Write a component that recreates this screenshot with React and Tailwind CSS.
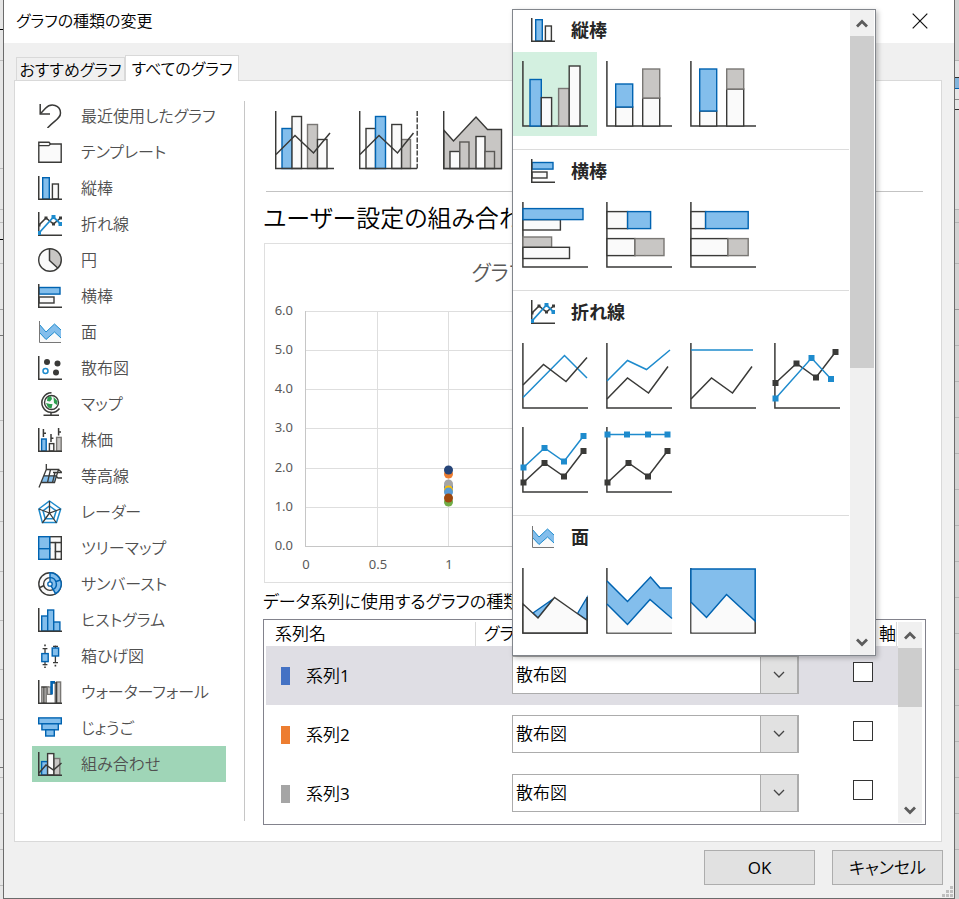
import React from "react";

const DARK = "#3a3a38";
const WHITE = "#fafafa";
const BLUE = "#83beec";
const BLUE_EDGE = "#0063b1";
const BLUE_LINE = "#1e8bcd";
const GRAY = "#c8c6c4";
const GRAY_EDGE = "#797774";

const TONES = {
  blue: [BLUE, BLUE_EDGE],
  gray: [GRAY, GRAY_EDGE],
  darkGray: [GRAY, "#5a5956"],
  white: [WHITE, DARK],
};

function Box({ tone, x, y, w, h, sw = 1.4 }) {
  const [fill, stroke] = TONES[tone];
  return <rect x={x} y={y} width={w} height={h} fill={fill} stroke={stroke} strokeWidth={sw} />;
}

function Line({ d, color = DARK, sw = 1.5 }) {
  return <path d={d} fill="none" stroke={color} strokeWidth={sw} />;
}

function Marked({ points, color, size = 6, sw = 1.5 }) {
  return (
    <g>
      <polyline points={points.map((p) => p.join(",")).join(" ")} fill="none" stroke={color} strokeWidth={sw} />
      {points.map(([x, y]) => (
        <rect key={x} x={x - size / 2} y={y - size / 2} width={size} height={size} fill={color} />
      ))}
    </g>
  );
}

const SmallAxis = () => <Line d="M.75 0V23.25H24" />;

const smallIcons = {
  recent: (
    <g>
      <Line d="M2.2 0V10H12" />
      <Line d="M2.4 9.8L7.5 4.2C13-1.5 22.5 1 22.5 9C22.5 14.5 17 16 9.5 24" />
    </g>
  ),
  template: (
    <g>
      <path d="M.8 2.2H11L12.5 4H23.2V22.2H.8Z" fill={WHITE} stroke={DARK} strokeWidth="1.4" />
      <Line d="M.8 5.6H10.8L12.5 4" sw={1.2} />
    </g>
  ),
  column: (
    <g>
      <Box tone="blue" x={4.7} y={1.7} w={6.6} h={21.3} />
      <Box tone="white" x={14.4} y={8} w={6} h={15} />
      <SmallAxis />
    </g>
  ),
  line: (
    <g>
      <SmallAxis />
      <Marked points={[[1, 13], [8, 6], [15.5, 12], [22.5, 6]]} color={DARK} size={3} sw={1.6} />
      <Marked points={[[1, 21], [15.5, 5], [22.5, 12]]} color={BLUE_LINE} size={4} sw={1.8} />
    </g>
  ),
  pie: (
    <g>
      <circle cx="12" cy="12" r="11.3" fill={WHITE} />
      <path d="M11.5 .8V12.5L20 20.3A11.3 11.3 0 0 0 12 .7Z" fill={GRAY} />
      <circle cx="12" cy="12" r="11.3" fill="none" stroke={DARK} strokeWidth="1.4" />
      <Line d="M11.5 .8V12.5L20 20.3" />
    </g>
  ),
  bar: (
    <g>
      <Box tone="blue" x={1} y={3.5} w={21} h={6.6} />
      <Box tone="white" x={1} y={13} w={15} h={6} />
      <SmallAxis />
    </g>
  ),
  area: (
    <g>
      <path d="M1.5 12L8 19.5L16.5 12L23 18V22H1.5Z" fill={WHITE} />
      <path d="M1.5 4.5L8 12L16.5 4L23 10V18L16.5 12L8 19.5L1.5 12.5Z" fill={BLUE} />
      <Line d="M1.5 4.5L8 12L16.5 4L23 10M1.5 12.5L8 19.5L16.5 12L23 18" color={BLUE_LINE} sw={1} />
      <Line d="M1.5 1V22.5H23" sw={1} color="#777" />
    </g>
  ),
  scatter: (
    <g>
      <SmallAxis />
      <circle cx="9" cy="6" r="3" fill={DARK} />
      <circle cx="19.5" cy="7.5" r="3" fill={DARK} />
      <circle cx="18" cy="16.5" r="3" fill={DARK} />
      <circle cx="7.5" cy="15" r="2.5" fill="#fff" stroke={BLUE_LINE} strokeWidth="1.5" />
    </g>
  ),
  map: (
    <g>
      <circle cx="13.5" cy="10.5" r="7" fill={WHITE} stroke={DARK} strokeWidth="1.4" />
      <path d="M9.5 5.5L13 4L14 7L12 9.5L9 9Z M15.5 5L19.5 9L19 13L16 11Z M8 11L12 12L14.5 12L13.5 16.5L10 15.5Z" fill="#2e9e4f" />
      <Line d="M13.5 .8A9.8 9.8 0 1 0 21.5 16.5" />
      <Line d="M13 20V23.2M5.5 23.2H21" />
    </g>
  ),
  stock: (
    <g>
      <Box tone="blue" x={3.6} y={11} w={4.6} h={12} />
      <Box tone="white" x={11.4} y={15.6} w={4.4} h={7.4} />
      <Box tone="gray" x={18.6} y={9.4} w={4.6} h={13.6} />
      <SmallAxis />
      <Line d="M5.4 1V9M5.4 5.2H8M13 6V14M13 10.2H15.4M20.6 0V7.4M20.6 4H23" />
    </g>
  ),
  surface: (
    <g>
      <path d="M6 11.5H19L16.5 18H3.5Z" fill={BLUE} />
      <Line d="M8.3 0V5.5M8.3 5.5H20.5L16.5 18.5H3.5M8.3 5.5L1 23.5M6 11.8H18L20 14H24M12.5 5.5L9.5 18.5M17 8.5L14.5 18.5M20.5 5.5L24 8.5H15" sw={1.3} />
    </g>
  ),
  radar: (
    <g>
      <path d="M11.5 1L22.7 9L18.5 22.5H4.3L.8 9Z M11.5 6L18.2 10.8L15.8 18.7H7.2L5 10.8Z" fill="none" stroke={BLUE_LINE} strokeWidth="1.5" />
      <Line d="M11.5 1V13L22.7 9M11.5 13L18.5 23M11.5 13L4.3 23M11.5 13L.8 9" sw={1.3} />
    </g>
  ),
  treemap: (
    <g>
      <Box tone="white" x={11.7} y={0.7} w={11.6} h={5.9} />
      <Box tone="white" x={11.7} y={6.6} w={5.8} h={16.7} />
      <Box tone="white" x={17.5} y={6.6} w={5.8} h={9} />
      <Box tone="white" x={17.5} y={15.6} w={5.8} h={7.7} />
      <Box tone="blue" x={0.7} y={0.7} w={11} h={12} />
      <Box tone="blue" x={0.7} y={12.7} w={11} h={10.6} />
    </g>
  ),
  sunburst: (
    <g>
      <circle cx="12" cy="12" r="11.2" fill={WHITE} stroke={DARK} strokeWidth="1.4" />
      <circle cx="12" cy="12" r="6.4" fill={WHITE} stroke={DARK} strokeWidth="1.4" />
      <path d="M12 .8A11.2 11.2 0 0 1 17.6 21.7L12 12Z" fill={BLUE} stroke={BLUE_EDGE} strokeWidth="1.4" />
      <path d="M12 5.6A6.4 6.4 0 0 1 15.2 17.5M18 9.5L22.5 8" fill="none" stroke={BLUE_EDGE} strokeWidth="1.4" />
      <circle cx="12" cy="12" r="2.2" fill={WHITE} stroke={BLUE_EDGE} strokeWidth="1.3" />
      <Line d="M2 15.5L6 13.5" />
    </g>
  ),
  histogram: (
    <g>
      <Box tone="blue" x={3.7} y={8} w={6} h={15} />
      <Box tone="blue" x={9.7} y={2} w={6} h={21} />
      <Box tone="blue" x={15.7} y={14} w={6.2} h={9} />
      <SmallAxis />
    </g>
  ),
  boxplot: (
    <g>
      <Line d="M7 4V9M4.6 4.6H9.4M7 18V21.5M4.6 20.6H9.4M17.4 1.5V5M15 2.4H20M17.4 12V19M15 18.6H20" sw={1.3} />
      <Box tone="blue" x={3.8} y={9.6} w={6.4} h={8} />
      <Box tone="blue" x={14.2} y={4} w={6.4} h={8} />
      <path d="M6.2 .6h1.6v1.6h-1.6zM6.2 22.4h1.6v1.6h-1.6zM16.6 20.8h1.6v1.6h-1.6z" fill={DARK} />
    </g>
  ),
  waterfall: (
    <g>
      <Box tone="gray" x={3.8} y={7} w={4.4} h={16} />
      <Line d="M5.9 7V23M3.4 7H11" sw={1.1} />
      <Box tone="gray" x={9.4} y={7} w={3.8} h={7.4} sw={1.2} />
      <path d="M13.6 14.5V2.4H17" fill="none" stroke={BLUE_EDGE} strokeWidth="2.6" />
      <Box tone="gray" x={18.6} y={2} w={4} h={21} />
      <Line d="M17.2 2V23M18.6 2V23" sw={1.1} />
      <SmallAxis />
    </g>
  ),
  funnel: (
    <g>
      <Box tone="blue" x={0.7} y={1.9} w={22.6} h={5.9} />
      <Box tone="blue" x={3.9} y={7.8} w={16.4} h={6} />
      <Box tone="blue" x={7.7} y={13.8} w={8.6} h={6.2} />
    </g>
  ),
  combo: (
    <g>
      <Box tone="gray" x={15.8} y={6.5} w={6} h={16.5} />
      <Box tone="blue" x={3.6} y={9.6} w={6} h={13.4} />
      <Box tone="white" x={9.6} y={1.6} w={6.2} h={21.4} />
      <SmallAxis />
      <Line d="M1 21L8 13L15.5 18L23.5 11" />
    </g>
  ),
};

function SmallIcon({ name }) {
  return (
    <svg viewBox="0 0 24 24" className="size-6 shrink-0" aria-hidden="true">
      {smallIcons[name]}
    </svg>
  );
}

const categories = [
  ["recent", "最近使用したグラフ"],
  ["template", "テンプレート"],
  ["column", "縦棒"],
  ["line", "折れ線"],
  ["pie", "円"],
  ["bar", "横棒"],
  ["area", "面"],
  ["scatter", "散布図"],
  ["map", "マップ"],
  ["stock", "株価"],
  ["surface", "等高線"],
  ["radar", "レーダー"],
  ["treemap", "ツリーマップ"],
  ["sunburst", "サンバースト"],
  ["histogram", "ヒストグラム"],
  ["boxplot", "箱ひげ図"],
  ["waterfall", "ウォーターフォール"],
  ["funnel", "じょうご"],
  ["combo", "組み合わせ"],
];

const comboTypes = [
  {
    label: "集合縦棒 - 折れ線",
    art: (
      <g>
        <Box tone="blue" x={7} y={18.5} w={10} h={40} />
        <Box tone="white" x={17} y={6.5} w={9.5} h={52} />
        <Box tone="gray" x={32.5} y={14.5} w={10} h={44} />
        <Box tone="white" x={42.5} y={29.5} w={9.5} h={29} />
        <Line d="M.7 1V58.6H59" />
        <Line d="M1 44.5L20 25.5L38.5 43L55 23" />
      </g>
    ),
  },
  {
    label: "集合縦棒 - 第 2 軸の折れ線",
    art: (
      <g>
        <Box tone="white" x={7} y={18.5} w={9.5} h={40} />
        <Box tone="gray" x={42.5} y={29.5} w={9} h={29} />
        <Box tone="blue" x={16.5} y={6.5} w={10} h={52} />
        <Box tone="white" x={32.8} y={14.5} w={9.7} h={44} />
        <Line d="M.7 1V58.6H58" />
        <Line d="M1 44.5L20 25.5L38.5 43L54.5 23" />
        <path d="M58.2 1V58.6" stroke={DARK} strokeWidth="1.4" strokeDasharray="5 1.6" />
      </g>
    ),
  },
  {
    label: "積み上げ面 - 集合縦棒",
    art: (
      <g>
        <path d="M.7 20L10.5 31L33 7L44.5 19.5H58.5V58.6H.7Z" fill={GRAY} stroke={DARK} strokeWidth="1.4" />
        <Box tone="white" x={7} y={41.5} w={9.8} h={17} />
        <Box tone="darkGray" x={16.8} y={32} w={9.2} h={26.5} />
        <Box tone="white" x={33} y={26.5} w={9} h={32} />
        <Box tone="darkGray" x={42} y={41.5} w={9.5} h={17} />
        <Line d="M.7 1V58.6H59" />
      </g>
    ),
  },
];

const Axis = () => <Line d="M.9 0V65.1H66" />;

const darkTrend = "M1 56L21.5 35L42.5 50L62 23.5";
const darkPoints = [[1.5, 55.5], [22.5, 36], [42, 49.5], [61.5, 24]];

const gallery = [
  {
    icon: "column",
    title: "縦棒",
    items: [
      ["集合縦棒", <g><Box tone="blue" x={8} y={18.5} w={11.3} h={46.5} /><Box tone="white" x={19.3} y={36.6} w={10.3} h={28.4} /><Box tone="gray" x={36.6} y={27.5} w={10.6} h={37.5} /><Box tone="white" x={47.2} y={5} w={10.8} h={60} /></g>],
      ["積み上げ縦棒", <g><Box tone="white" x={9.7} y={46} w={17} h={19} /><Box tone="blue" x={9.7} y={23} w={17} h={23} /><Box tone="white" x={36.7} y={37} w={17} h={28} /><Box tone="gray" x={36.7} y={8} w={17} h={29} /></g>],
      ["100% 積み上げ縦棒", <g><Box tone="white" x={9.7} y={50} w={17} h={15} /><Box tone="blue" x={9.7} y={8} w={17} h={42} /><Box tone="white" x={36.7} y={28} w={17} h={37} /><Box tone="gray" x={36.7} y={8} w={17} h={20} /></g>],
    ],
  },
  {
    icon: "bar",
    title: "横棒",
    items: [
      ["集合横棒", <g><Box tone="white" x={1} y={17.6} w={37.4} h={10.4} /><Box tone="blue" x={1} y={6.6} w={60} h={11} /><Box tone="gray" x={1} y={35} w={28.6} h={10.3} /><Box tone="white" x={1} y={45.3} w={46.5} h={11.2} /></g>],
      ["積み上げ横棒", <g><Box tone="white" x={1} y={9.6} w={20.6} h={17} /><Box tone="blue" x={21.6} y={9.6} w={23} h={17} /><Box tone="white" x={1} y={36.6} w={28} h={17} /><Box tone="gray" x={29} y={36.6} w={29} h={17} /></g>],
      ["100% 積み上げ横棒", <g><Box tone="white" x={1} y={9.6} w={14.6} h={17} /><Box tone="blue" x={15.6} y={9.6} w={42.6} h={17} /><Box tone="white" x={1} y={36.6} w={37} h={17} /><Box tone="gray" x={38} y={36.6} w={20.2} h={17} /></g>],
    ],
  },
  {
    icon: "line",
    title: "折れ線",
    items: [
      ["折れ線", <g><Line d="M1 54.5L42.5 12.5L65 35" color={BLUE_LINE} /><Line d="M1 42L21.5 21.5L44 38.5L65 14.5" /></g>],
      ["積み上げ折れ線", <g><Line d="M1 38L21.5 17.5L40.5 26.5L64 7" color={BLUE_LINE} /><Line d={darkTrend} /></g>],
      ["100% 積み上げ折れ線", <g><Line d="M1 7H63" color={BLUE_LINE} /><Line d={darkTrend} /></g>],
      ["マーカー付き折れ線", <g><Marked points={[[1.5, 40], [22.5, 20.5], [42, 34.5], [61.5, 9]]} color={DARK} /><Marked points={[[1.5, 55.5], [37.5, 15], [57, 36]]} color={BLUE_LINE} /></g>],
      ["マーカー付き積み上げ折れ線", <g><Marked points={[[1.5, 40.5], [22.5, 21], [42, 34.5], [61.5, 9]]} color={BLUE_LINE} /><Marked points={darkPoints} color={DARK} /></g>],
      ["マーカー付き 100% 積み上げ折れ線", <g><Marked points={[[1.5, 7.5], [21, 7.5], [42, 7.5], [61.5, 7.5]]} color={BLUE_LINE} /><Marked points={darkPoints} color={DARK} /></g>],
    ],
  },
  {
    icon: "area",
    title: "面",
    items: [
      ["面", <g><path d="M11 45L31 31L16 50Z M55.5 45.5L65 29.5V52Z" fill={BLUE} stroke={BLUE_EDGE} strokeWidth="1.4" /><path d="M1 36L16 50L32.5 29.5L65.2 52.5V65H1Z" fill={WHITE} stroke={DARK} strokeWidth="1.4" /><Line d="M65.2 29V65" /></g>],
      ["積み上げ面", <g><path d="M1.6 36L21.5 56.5L44 31.5L66 50.5V64.4H1.6Z" fill={WHITE} /><path d="M1.6 13L21.5 33.5L44.5 9L54 20H66V50.5L44 31.5L21.5 56.5L1.6 36Z" fill={BLUE} /><Line d="M1 13L21.5 33.5L44.5 9L54 20H66M1 36L21.5 56.5L44 31.5L66 50.5" color={BLUE_EDGE} /></g>],
      ["100% 積み上げ面", <g><rect x="1.6" y="1" width="63.4" height="63.4" fill={WHITE} /><Line d="M65.2 52V65.1" /><path d="M.9 .9H65.2V53L36.5 26.5L16.5 49.5L.9 34Z" fill={BLUE} stroke={BLUE_EDGE} strokeWidth="1.5" /></g>],
    ],
  },
];

function Chevron({ up = false }) {
  return (
    <svg viewBox="0 0 12 9" className="h-[9px] w-3" aria-hidden="true">
      <path d={up ? "M1 7.5L6 2.5L11 7.5" : "M1 1.5L6 6.5L11 1.5"} fill="none" stroke="#5c5c5c" strokeWidth="2.8" />
    </svg>
  );
}

function ScrollBar({ thumb }) {
  return (
    <div className="flex w-6 shrink-0 flex-col bg-[#f0f0f0]">
      <button type="button" aria-label="上へスクロール" className="flex h-[26px] items-center justify-center">
        <Chevron up />
      </button>
      <div className={`bg-[#cdcdcd] ${thumb}`} />
      <button type="button" aria-label="下へスクロール" className="mt-auto flex h-[26px] items-center justify-center">
        <Chevron />
      </button>
    </div>
  );
}

function ChartTypeMenu() {
  return (
    <div className="absolute bottom-full left-0 z-10 flex h-[647px] w-[364px] border border-[#82868c] bg-white pr-px shadow-[2px_2px_5px_rgba(0,0,0,0.25)]">
      <div className="mr-px flex-1 overflow-hidden">
        {gallery.map((group, g) => (
          <section key={group.title} className={g === 0 ? "-mt-px" : "border-t border-[#dcdcdc]"}>
            <h3 className="flex h-[43px] items-center gap-4 pb-px pl-[18px] text-[18px] leading-6 font-bold text-[#262626]">
              <SmallIcon name={group.icon} />
              {group.title}
            </h3>
            <div className="grid grid-cols-4 pb-[13px]">
              {group.items.map(([label, art], i) => (
                <button
                  key={label}
                  type="button"
                  aria-label={label}
                  className={`size-[84px] p-[9px] ${g === 0 && i === 0 ? "bg-[#d3f0e0]" : ""}`}
                >
                  <svg viewBox="0 0 66 66" className="size-[66px] overflow-visible">
                    <Axis />
                    {art}
                  </svg>
                </button>
              ))}
            </div>
          </section>
        ))}
      </div>
      <ScrollBar thumb="h-[332px]" />
    </div>
  );
}

function PreviewChart() {
  const dots = [
    ["#ed7d31", 230],
    ["#4472c4", 243],
    ["#a5a5a5", 240],
    ["#ffc000", 246],
    ["#5b9bd5", 248],
    ["#70ad47", 258],
    ["#9e480e", 254],
    ["#264478", 226],
  ];
  return (
    <svg
      viewBox="0 0 551 338"
      className="h-[338px] w-[551px] font-['Noto_Sans','Noto_Sans_CJK_JP',sans-serif] font-normal"
      role="img"
      aria-label="グラフのプレビュー"
    >
      {[0, 1, 2, 3, 4, 5, 6].map((v) => {
        const y = 302 - Math.round(v * 39.2);
        return (
          <g key={v}>
            <path d={`M40 ${y + 0.5}H530`} stroke={v === 0 ? "#c6c6c6" : "#dedede"} />
            <text x="28" y={y + 4} textAnchor="end" fontSize="13" fill="#595959">
              {v.toFixed(1)}
            </text>
          </g>
        );
      })}
      {["0", "0.5", "1", "1.5", "2", "2.5", "3"].map((label, i) => {
        const x = 40 + Math.round(i * 71.5);
        return (
          <g key={label}>
            <path d={`M${x + 0.5} 67V302`} stroke={i === 0 ? "#c6c6c6" : "#dedede"} />
            <text x={x + 1} y="325" textAnchor="middle" fontSize="13" fill="#595959">
              {label}
            </text>
          </g>
        );
      })}
      {dots.map(([color, y]) => (
        <circle key={color} cx="183.5" cy={y} r="4.5" fill={color} />
      ))}
      <text x="273" y="36" textAnchor="middle" fontSize="21" fill="#595959" className="font-[350]">
        グラフ タイトル
      </text>
    </svg>
  );
}

const series = [
  [1, "bg-[#4472c4]"],
  [2, "bg-[#ed7d31]"],
  [3, "bg-[#a5a5a5]"],
];

function SeriesTable() {
  return (
    <div className="flex border border-[#82828c] pt-[2px] pr-[3px] pb-px pl-[2px]">
      <table className="flex-1 table-fixed border-collapse">
        <colgroup>
          <col className="w-[210px]" />
          <col />
          <col className="w-[82px]" />
        </colgroup>
        <thead>
          <tr className="h-6 leading-6">
            <th scope="col" className="p-0 pl-[9px] text-left font-[350]">
              <span className="block border-r border-[#d9d9d9]">系列名</span>
            </th>
            <th scope="col" className="p-0 pl-2 text-left font-[350]">グラフの種類</th>
            <th scope="col" className="p-0 pr-px text-right font-[350] whitespace-nowrap">
              <span className="block border-r border-[#d9d9d9]">第 2 軸</span>
            </th>
          </tr>
        </thead>
        <tbody>
          {series.map(([number, color], i) => (
            <tr key={number} className={`h-[59px] ${i === 0 ? "bg-[#dfdee4]" : ""}`}>
              <td className="p-0">
                <label htmlFor={`type-${number}`} className="flex items-center gap-4 pl-[15px]">
                  <span className={`h-[18px] w-[9px] ${color}`} />
                  <span>
                    系列<span className="font-normal">{number}</span>
                  </span>
                </label>
              </td>
              <td className="p-0 pt-[10px] pl-9 align-top">
                <div className="relative h-[38px] w-[287px]">
                  {i === 0 && <ChartTypeMenu />}
                  <select id={`type-${number}`} className="block size-full appearance-none border border-[#acacac] bg-white px-[3px]">
                    <option>散布図</option>
                  </select>
                  <span className="pointer-events-none absolute inset-y-0 right-0 flex w-[39px] items-center justify-center border border-r-2 border-[#acacac] bg-[#e1e1e1]">
                    <svg viewBox="0 0 12 8" className="h-2 w-3" aria-hidden="true">
                      <path d="M1 1L6 6L11 1" fill="none" stroke="#444" strokeWidth="1.3" />
                    </svg>
                  </span>
                </div>
              </td>
              <td className="p-0 pt-4 pl-[37px] align-top">
                <input
                  type="checkbox"
                  aria-label={`系列${number} 第 2 軸`}
                  className="block size-5 appearance-none border border-[#333] bg-white"
                />
              </td>
            </tr>
          ))}
        </tbody>
      </table>
      <ScrollBar thumb="h-[59px]" />
    </div>
  );
}

const leftSheetRows = [
  "h-[30px] border-black", "h-[31px] border-[#bdbdbd]", "h-[108px] border-[#bdbdbd]", "h-[41px] border-[#bdbdbd]",
  "h-[13px] border-[#bdbdbd]", "h-[17px] border-black", "h-[24px] border-[#bdbdbd]", "h-[46px] border-[#a0a0a0]",
  "h-[26px] border-[#777]", "h-[85px] border-[#bdbdbd]", "h-[51px] border-[#bdbdbd]", "h-[50px] border-[#bdbdbd]",
  "h-[50px] border-[#bdbdbd]", "h-[49px] border-[#bdbdbd]", "h-[49px] border-[#bdbdbd]", "h-[50px] border-[#999]",
  "h-[48px] border-[#777]", "h-[10px] border-[#bdbdbd]", "h-[36px] border-[#bdbdbd]", "h-[36px] border-[#bdbdbd]",
  "h-[36px] border-[#bdbdbd]",
];

const rightSheetRows = [
  "h-[61px] border-[#b5b5b5]", "h-[17px] border-[#333] bg-[#e6e6e6]", "h-[11px] border-[#0063b1] bg-[#83b4dc]",
  "h-[11px] border-[#888] bg-[#e6e6e6]", "h-[10px] border-[#333] bg-[#e6e6e6]", "h-[100px] border-[#b5b5b5] bg-[#dedede]",
  "h-[13px] border-[#b5b5b5]", "h-[41px] border-[#b5b5b5]", "h-[46px] border-[#999]", "h-[36px] border-[#b5b5b5]",
  "h-[36px] border-[#b5b5b5]", "h-[36px] border-[#b5b5b5]", "h-[36px] border-[#b5b5b5]", "h-[36px] border-[#b5b5b5]",
  "h-[36px] border-[#b5b5b5]", "h-[36px] border-[#b5b5b5]", "h-[36px] border-[#b5b5b5]", "h-[36px] border-[#b5b5b5]",
  "h-[36px] border-[#b5b5b5]", "h-[36px] border-[#b5b5b5]", "h-[36px] border-[#b5b5b5]", "h-[36px] border-[#b5b5b5]",
  "h-[36px] border-[#b5b5b5]", "h-[36px] border-[#b5b5b5]",
];

function SheetEdge({ rows, className }) {
  return (
    <div className={`shrink-0 ${className}`} aria-hidden="true">
      {rows.map((row, i) => (
        <div key={i} className={`border-b ${row}`} />
      ))}
    </div>
  );
}

export default function App() {
  return (
    <div className="flex min-h-screen font-['Open_Sans','Noto_Sans_CJK_JP',sans-serif] text-[17px] leading-6 font-[350] text-black [font-feature-settings:'palt']">
      <SheetEdge rows={leftSheetRows} className="w-[3px] bg-[#e6e6e6]" />

      <div role="dialog" aria-labelledby="dialog-title" className="flex flex-1 flex-col border-x border-b border-[#6b6b6b] bg-[#f0f0f0]">
        <header className="flex h-[43px] items-center justify-between bg-white pr-[26px] pb-px pl-3">
          <h1 id="dialog-title" className="text-[16px]">グラフの種類の変更</h1>
          <button type="button" aria-label="閉じる">
            <svg viewBox="0 0 16 16" className="block size-4">
              <path d="M.7 .7L15.3 15.3M15.3 .7L.7 15.3" stroke="#111" strokeWidth="1.2" />
            </svg>
          </button>
        </header>

        <div role="tablist" className="flex h-[38px] items-end pl-3 text-[16px]">
          <button role="tab" type="button" aria-selected="false" className="h-6 w-[109px] border border-b-0 border-[#d9d9d9] whitespace-nowrap">
            おすすめグラフ
          </button>
          <button role="tab" type="button" aria-selected="true" className="relative z-10 h-[26px] w-[114px] border border-b-0 border-[#d9d9d9] bg-white whitespace-nowrap">
            すべてのグラフ
          </button>
        </div>

        <div role="tabpanel" className="-mt-px mr-3 ml-[10px] flex border border-[#d9d9d9] bg-white">
          <nav className="ml-[17px] w-[194px] pt-[17px] text-[16px] text-[#505050]">
            <ul>
              {categories.map(([icon, label]) => (
                <li key={icon}>
                  <button
                    type="button"
                    className={`flex h-9 w-full items-center gap-[19px] pl-[6px] text-left whitespace-nowrap ${icon === "combo" ? "bg-[#9fd5b7]" : ""}`}
                  >
                    <SmallIcon name={icon} />
                    {label}
                  </button>
                </li>
              ))}
            </ul>
          </nav>

          <div className="my-5 ml-[18px] w-px bg-[#c6c6c6]" />

          <main className="mr-[15px] ml-[18px] min-w-0 flex-1 pt-[29px] pb-4">
            <div className="flex gap-6 pl-3">
              {comboTypes.map(({ label, art }) => (
                <button key={label} type="button" aria-label={label} className="size-[60px]">
                  <svg viewBox="0 0 60 60" className="size-[60px]">{art}</svg>
                </button>
              ))}
            </div>
            <hr className="mx-[3px] mt-[21px] border-[#c3c3c3]" />
            <h2 className="flex h-[51px] items-center pt-px text-[24px]">ユーザー設定の組み合わせ</h2>
            <div className="ml-px w-fit border border-[#dfdfdf]">
              <PreviewChart />
            </div>
            <p className="h-9 pt-[7px]">データ系列に使用するグラフの種類と軸を選択してください:</p>
            <SeriesTable />
          </main>
        </div>

        <footer className="flex flex-1 items-start justify-end gap-[17px] pt-2">
          <button type="button" className="h-[35px] w-[111px] border border-[#adadad] bg-[#e1e1e1] font-normal">OK</button>
          <button type="button" className="h-[35px] w-[111px] border border-[#adadad] bg-[#e1e1e1]">キャンセル</button>
          <svg viewBox="0 0 12 12" className="-ml-[18px] size-3 self-end" aria-hidden="true">
            <path d="M8 0h3v3h-3zM4 4h3v3h-3zM8 4h3v3h-3zM0 8h3v3h-3zM4 8h3v3h-3zM8 8h3v3h-3z" fill="#bfbfbf" />
          </svg>
        </footer>
      </div>

      <SheetEdge rows={rightSheetRows} className="w-1 bg-[#d2d2d2]" />
    </div>
  );
}
